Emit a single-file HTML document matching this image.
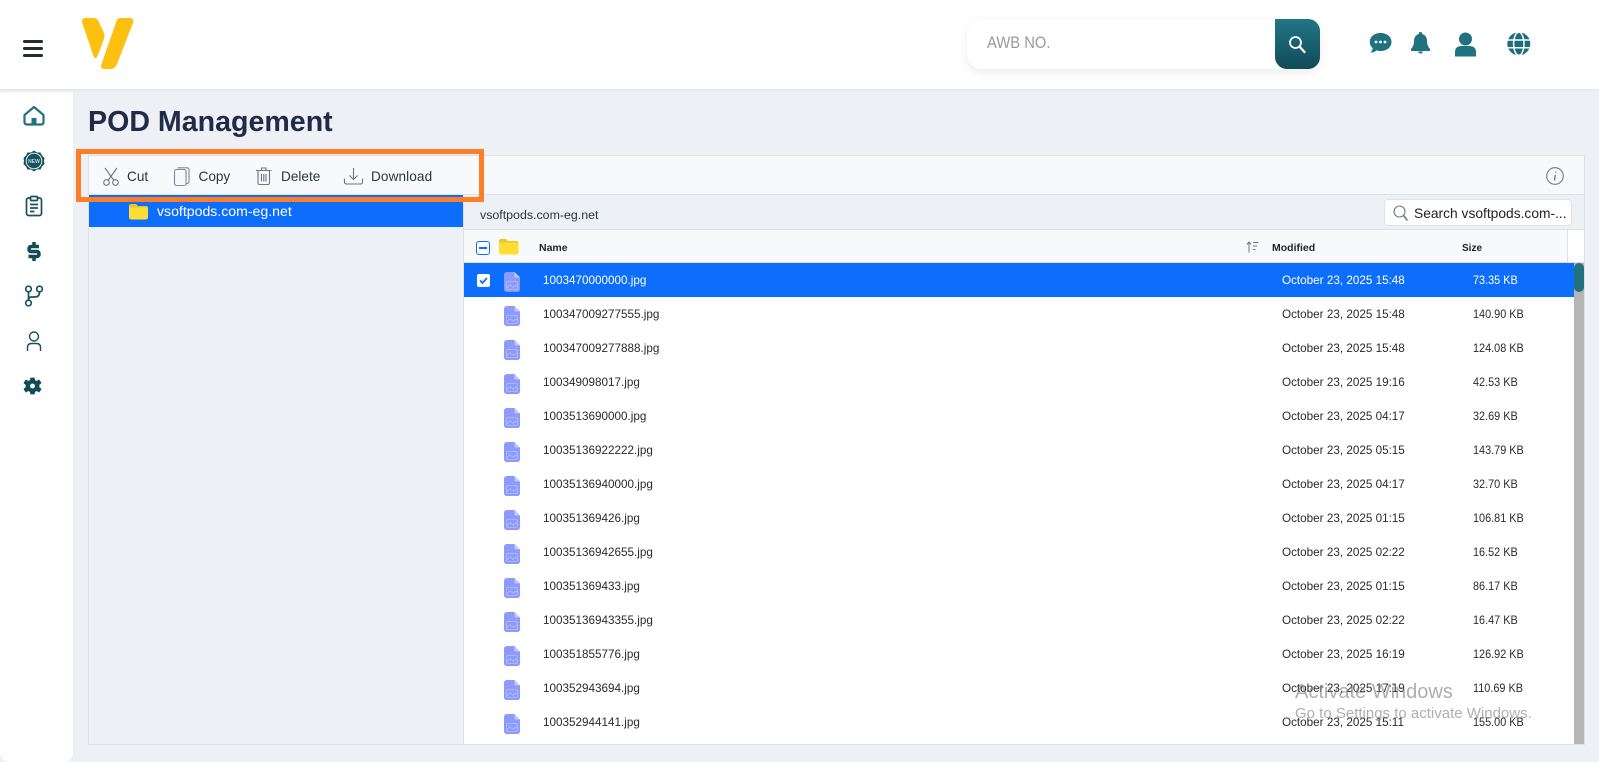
<!DOCTYPE html>
<html><head><meta charset="utf-8"><title>POD Management</title>
<style>
*{box-sizing:border-box}
html,body{margin:0;padding:0;width:1599px;height:762px;overflow:hidden;background:#edf0f5;font-family:"Liberation Sans",sans-serif;color:#222}
.a{position:absolute;white-space:nowrap}
svg{position:absolute;overflow:visible}
.row{position:absolute;left:464px;width:1110px;height:34px;font-size:11.700px;color:#2b2b2b;background:#fff}
.row span{position:absolute;top:10.500px;line-height:14px;white-space:nowrap}
.row .n{left:79px}.row .d{left:818px}.row .s{left:1009px;transform:scaleX(.93);transform-origin:left}
.row svg{left:40px;top:9px}
.row.sel{background:#0d6efd;color:#fff}
.tb{font-size:13.600px;color:#2c3440;top:169px;line-height:16px}
</style></head><body>
<svg width="0" height="0" style="position:absolute"><defs>
<symbol id="f" viewBox="0 0 16 20"><path d="M3 0H10.500L16 5.500V17Q16 20 13 20H3Q0 20 0 17V3Q0 0 3 0Z" fill="#8c9bfb"/><path d="M10.500 0L16 5.500H12Q10.500 5.500 10.500 4Z" fill="#c2cafd"/><rect x="2.500" y="9.500" width="11" height="8" rx="1.500" fill="none" stroke="#adb7fd" stroke-width="1"/><path d="M3 15.500L6 12.700L9 15L13 13" fill="none" stroke="#adb7fd" stroke-width="1"/></symbol>
</defs></svg>

<div class="a" style="left:0;top:0;width:1599px;height:89px;background:#fff;box-shadow:0 1px 3px rgba(0,0,0,.05)"></div>
<div class="a" style="left:0;top:92px;width:73px;height:670px;background:#fff;border-radius:0 0 10px 10px"></div>

<!-- hamburger -->
<div class="a" style="left:23px;top:40px;width:20px;height:3px;background:#262b33;border-radius:1.500px"></div>
<div class="a" style="left:23px;top:47px;width:20px;height:3px;background:#262b33;border-radius:1.500px"></div>
<div class="a" style="left:23px;top:54px;width:20px;height:3px;background:#262b33;border-radius:1.500px"></div>

<!-- logo -->
<svg style="left:0;top:0" width="140" height="75"><path d="M85 18H94Q97 18 98.500 21L104 33Q105 36 104 39L97.500 56Q95.500 60 93.500 56L82.300 23Q81 18 85 18Z" fill="#fdc010"/><path d="M120 18H130Q134.500 18 133 23L117 64Q115 69 110 69H104Q100 69 101.500 64L116.500 21Q117.500 18 120 18Z" fill="#fdc010"/></svg>

<!-- search -->
<div class="a" style="left:967px;top:19px;width:353px;height:50px;background:#fff;border-radius:14px;box-shadow:0 3px 10px rgba(0,0,0,.08)"></div>
<div class="a" style="left:987px;top:33px;font-size:17px;line-height:20px;color:#9a9a9a;transform:scaleX(.87);transform-origin:left">AWB NO.</div>
<div class="a" style="left:1275px;top:19px;width:45px;height:50px;background:linear-gradient(#227686,#124a57);border-radius:0 12px 12px 12px"></div>
<svg style="left:1288px;top:35px" width="18" height="18" fill="none" stroke="#fff"><circle cx="7.500" cy="7.500" r="5.500" stroke-width="1.800"/><path d="M11.500 11.500L16.500 17" stroke-width="2.200" stroke-linecap="round"/></svg>

<!-- top icons -->
<svg style="left:1369px;top:32px" width="24" height="24"><path d="M11.500 1C17.500 1 22.500 4.500 22.500 10S17.500 19 11.500 19Q9.500 19 7.700 18.400Q5 20.700 1.500 20.500Q3.500 18.500 3.700 16.200Q.8 13.500 .8 10C.8 4.500 5.500 1 11.500 1Z" fill="#20727f"/><circle cx="7" cy="10" r="1.400" fill="#fff"/><circle cx="11.500" cy="10" r="1.400" fill="#fff"/><circle cx="16" cy="10" r="1.400" fill="#fff"/></svg>
<svg style="left:1410px;top:32px" width="21" height="22"><path d="M10.500 0Q12.300 0 12.300 2Q17 3.500 17 9Q17 14 20 17V19H1V17Q4 14 4 9Q4 3.500 8.700 2Q8.700 0 10.500 0Z" fill="#20727f"/><path d="M8 19.500H13Q12.500 21.500 10.500 21.500Q8.500 21.500 8 19.500Z" fill="#20727f"/></svg>
<svg style="left:1454px;top:32px" width="24" height="25"><circle cx="11.500" cy="7" r="6.500" fill="#20727f"/><path d="M1 24.500V20Q1 14 8 14H15Q22 14 22 20V24.500Z" fill="#20727f"/></svg>
<svg style="left:1507px;top:32px" width="24" height="24"><circle cx="11.800" cy="11.800" r="11.500" fill="#1c6c79"/><g fill="none" stroke="#fff" stroke-width="1.500"><path d="M.5 8H23.500M.5 15.700H23.500"/><ellipse cx="11.800" cy="11.800" rx="5.200" ry="11.500"/></g></svg>

<!-- sidebar icons -->
<svg style="left:23px;top:105px" width="22" height="22" fill="none" stroke="#20727f" stroke-width="2.200"><path d="M1.500 10L11 2L20.500 10V17Q20.500 19.500 18 19.500H4Q1.500 19.500 1.500 17Z" stroke-linejoin="round"/><rect x="8.500" y="13" width="5" height="7" fill="#20727f" stroke="none"/></svg>
<svg style="left:23px;top:150px" width="22" height="22"><path d="M11 .5L14 2.500L17.500 2.500L19 5.500L21.500 8L21 11L21.500 14L19 16.500L17.500 19.500L14 19.500L11 21.500L8 19.500L4.500 19.500L3 16.500L.5 14L1 11L.5 8L3 5.500L4.500 2.500L8 2.500Z" fill="#17535f"/><circle cx="11" cy="11" r="7.800" fill="#17535f" stroke="#dfe9eb" stroke-width="1"/><text x="11" y="12.800" text-anchor="middle" font-family="Liberation Sans" font-size="5px" font-weight="bold" fill="#c9dadd">NEW</text></svg>
<svg style="left:25px;top:195px" width="18" height="22" fill="none" stroke="#17535f" stroke-width="1.700"><rect x="1.500" y="3" width="15" height="17.500" rx="2"/><rect x="5.500" y="1.500" width="7" height="4" fill="#fff" rx="1"/><path d="M5 9.500H13M5 13H13M5 16.500H9.500"/></svg>
<svg style="left:27px;top:241px" width="14" height="21" fill="none" stroke="#124a57" stroke-width="3.500"><path d="M12 5.500H4.500Q2 5.500 2 8Q2 10.500 4.500 10.500H9.500Q12 10.500 12 13Q12 15.500 9.500 15.500H1.500"/><path d="M7 1V5M7 16V20"/></svg>
<svg style="left:24px;top:284px" width="22" height="22" fill="none" stroke="#17535f" stroke-width="1.700"><circle cx="4.500" cy="5" r="2.800"/><circle cx="15.500" cy="5" r="2.800"/><circle cx="4.500" cy="19" r="2.800"/><path d="M4.500 8V16M15.500 8Q15.500 13 11 13H7Q5 13 4.500 16"/></svg>
<svg style="left:26px;top:331px" width="16" height="22" fill="none" stroke="#17535f" stroke-width="1.400"><circle cx="8" cy="5.500" r="4.500"/><path d="M1.500 20V16.500Q1.500 12.500 5.500 12.500H10.500Q14.500 12.500 14.500 16.500V20"/></svg>
<svg style="left:24px;top:377px" width="17" height="18"><path d="M6.800 0H10.200L10.700 2.500L12.800 3.400L15 2L17 4.900L15 6.600V9.400L17 11.100L15 14L12.800 12.600L10.700 13.500L10.200 16H6.800L6.300 13.500L4.200 12.600L2 14L0 11.100L2 9.400V6.600L0 4.900L2 2L4.200 3.400L6.300 2.500Z" transform="translate(0,1)" fill="#124a57" stroke="#124a57" stroke-width=".8" stroke-linejoin="round"/><circle cx="8.500" cy="9" r="2.400" fill="#fff"/></svg>

<!-- title -->
<div class="a" style="left:88px;top:104px;font-size:28.600px;line-height:36px;font-weight:bold;color:#232a49">POD Management</div>

<!-- file manager panel -->
<div class="a" style="left:88px;top:155px;width:1497px;height:590px;border:1px solid #dee2e6;background:#edf0f5"></div>
<div class="a" style="left:89px;top:156px;width:1495px;height:39px;background:#f8f9fa;border-bottom:1px solid #dee2e6"></div>

<!-- toolbar -->
<svg style="left:103px;top:167px" width="16" height="19" fill="none" stroke="#6f7680" stroke-width="1.100"><circle cx="3.500" cy="15.500" r="2.800"/><circle cx="12.500" cy="15.500" r="2.800"/><path d="M2 1L11 13.500M14 1L5 13.500"/></svg>
<div class="a tb" style="left:127px">Cut</div>
<svg style="left:174px;top:167px" width="16" height="19" fill="none" stroke="#7a8899" stroke-width="1.100"><rect x=".5" y="2.500" width="11.500" height="16" rx="2"/><path d="M3.500 .8H13Q15 .8 15 3V14Q15 16.500 12.500 16.500"/></svg>
<div class="a tb" style="left:198.500px">Copy</div>
<svg style="left:256px;top:167px" width="16" height="18" fill="none" stroke="#6f7680" stroke-width="1.100"><path d="M0 3.500H15.500M5.500 3V1H10V3M2 4V16Q2 17.500 3.500 17.500H12Q13.500 17.500 13.500 16V4M5.500 7V14.500M7.800 7V14.500M10 7V14.500"/></svg>
<div class="a tb" style="left:281px">Delete</div>
<svg style="left:344px;top:167px" width="19" height="18" fill="none" stroke="#6f7680" stroke-width="1.100"><path d="M9.500 1V12M5.500 8.500L9.500 12.500L13.500 8.500M.5 11.500V15Q.5 17 2.500 17H16.500Q18.500 17 18.500 15V11.500"/></svg>
<div class="a tb" style="left:371px;letter-spacing:.1px">Download</div>

<!-- orange callout -->
<div class="a" style="left:76px;top:148.500px;width:407.700px;height:53px;border:5px solid #fd7e26;z-index:5"></div>
<svg style="left:1546px;top:167px" width="18" height="18" fill="none" stroke="#6f7680" stroke-width="1.100"><circle cx="9" cy="9" r="8.300"/><path d="M9.800 4.500V5.500M9.300 7.800L8.500 13.500" stroke-width="1.300"/></svg>

<!-- tree -->
<div class="a" style="left:89px;top:195px;width:374px;height:32px;background:#0d6efd"></div>
<svg style="left:129px;top:204px" width="20" height="16"><path d="M2 0H7L9 2H17Q19 2 19 4V5H0V2Q0 0 2 0Z" fill="#f0c32c"/><path d="M0 3.500H19V13Q19 15.500 16.500 15.500H2.500Q0 15.500 0 13Z" fill="#ffdd33"/></svg>
<div class="a" style="left:157px;top:203px;font-size:14.100px;line-height:16px;color:#fff">vsoftpods.com-eg.net</div>
<div class="a" style="left:463px;top:195px;width:1px;height:549px;background:#dee2e6"></div>

<!-- breadcrumb -->
<div class="a" style="left:480px;top:208px;font-size:12.400px;line-height:14px;color:#2c3440">vsoftpods.com-eg.net</div>
<div class="a" style="left:1384px;top:199px;width:188px;height:27px;background:#fff;border:1px solid #dee2e6;border-radius:4px"></div>
<svg style="left:1393px;top:205px" width="16" height="17" fill="none" stroke="#6f7680" stroke-width="1.100"><circle cx="6.500" cy="6.500" r="5.500"/><path d="M10.500 10.500L14.500 15.500" stroke-width="1.500"/></svg>
<div class="a" style="left:1414px;top:206px;font-size:13.800px;line-height:16px;color:#222">Search vsoftpods.com-...</div>

<!-- table header -->
<div class="a" style="left:464px;top:229px;width:1120px;height:34px;background:#f8f9fa;border-top:1px solid #dee2e6;border-bottom:1px solid #dee2e6"></div>
<div class="a" style="left:1567px;top:230px;width:17px;height:32px;background:#fff;border-left:1px solid #dee2e6"></div>
<div class="a" style="left:476px;top:241px;width:14px;height:14px;border:1.300px solid #0d6efd;border-radius:3px;background:#fff"></div>
<div class="a" style="left:479px;top:247px;width:8px;height:1.500px;background:#0d6efd"></div>
<svg style="left:499px;top:239px" width="20" height="16"><path d="M2 0H7L9 2H17.500Q19.500 2 19.500 4V5H0V2Q0 0 2 0Z" fill="#f0c32c"/><path d="M0 3.500H19.500V13Q19.500 15.500 17 15.500H2.500Q0 15.500 0 13Z" fill="#ffdd33"/></svg>
<div class="a" style="left:539px;top:242px;font-size:10.500px;line-height:13px;font-weight:bold;color:#212529">Name</div>
<svg style="left:1246px;top:241px" width="13" height="12" fill="none" stroke="#6f7680" stroke-width="1"><path d="M3 11.500V1M.8 3.500L3 1L5.200 3.500M7 1.500H12.500M7 5H11M7 8.500H9.500"/></svg>
<div class="a" style="left:1272px;top:242px;font-size:10.500px;line-height:13px;font-weight:bold;color:#212529">Modified</div>
<div class="a" style="left:1462px;top:242px;font-size:10px;line-height:13px;font-weight:bold;color:#212529">Size</div>

<!-- rows -->
<div class="row sel" style="top:263px"><svg width="16" height="20"><use href="#f"/></svg><span class="n">1003470000000.jpg</span><span class="d">October 23, 2025 15:48</span><span class="s">73.35 KB</span></div>
<div class="row" style="top:297px"><svg width="16" height="20"><use href="#f"/></svg><span class="n">100347009277555.jpg</span><span class="d">October 23, 2025 15:48</span><span class="s">140.90 KB</span></div>
<div class="row" style="top:331px"><svg width="16" height="20"><use href="#f"/></svg><span class="n">100347009277888.jpg</span><span class="d">October 23, 2025 15:48</span><span class="s">124.08 KB</span></div>
<div class="row" style="top:365px"><svg width="16" height="20"><use href="#f"/></svg><span class="n">100349098017.jpg</span><span class="d">October 23, 2025 19:16</span><span class="s">42.53 KB</span></div>
<div class="row" style="top:399px"><svg width="16" height="20"><use href="#f"/></svg><span class="n">1003513690000.jpg</span><span class="d">October 23, 2025 04:17</span><span class="s">32.69 KB</span></div>
<div class="row" style="top:433px"><svg width="16" height="20"><use href="#f"/></svg><span class="n">10035136922222.jpg</span><span class="d">October 23, 2025 05:15</span><span class="s">143.79 KB</span></div>
<div class="row" style="top:467px"><svg width="16" height="20"><use href="#f"/></svg><span class="n">10035136940000.jpg</span><span class="d">October 23, 2025 04:17</span><span class="s">32.70 KB</span></div>
<div class="row" style="top:501px"><svg width="16" height="20"><use href="#f"/></svg><span class="n">100351369426.jpg</span><span class="d">October 23, 2025 01:15</span><span class="s">106.81 KB</span></div>
<div class="row" style="top:535px"><svg width="16" height="20"><use href="#f"/></svg><span class="n">10035136942655.jpg</span><span class="d">October 23, 2025 02:22</span><span class="s">16.52 KB</span></div>
<div class="row" style="top:569px"><svg width="16" height="20"><use href="#f"/></svg><span class="n">100351369433.jpg</span><span class="d">October 23, 2025 01:15</span><span class="s">86.17 KB</span></div>
<div class="row" style="top:603px"><svg width="16" height="20"><use href="#f"/></svg><span class="n">10035136943355.jpg</span><span class="d">October 23, 2025 02:22</span><span class="s">16.47 KB</span></div>
<div class="row" style="top:637px"><svg width="16" height="20"><use href="#f"/></svg><span class="n">100351855776.jpg</span><span class="d">October 23, 2025 16:19</span><span class="s">126.92 KB</span></div>
<div class="row" style="top:671px"><svg width="16" height="20"><use href="#f"/></svg><span class="n">100352943694.jpg</span><span class="d">October 23, 2025 17:19</span><span class="s">110.69 KB</span></div>
<div class="row" style="top:705px;height:39px"><svg width="16" height="20"><use href="#f"/></svg><span class="n">100352944141.jpg</span><span class="d">October 23, 2025 15:11</span><span class="s">155.00 KB</span></div>

<!-- selected checkbox -->
<div class="a" style="left:477px;top:274px;width:13px;height:13px;background:#fff;border-radius:2px"></div>
<svg style="left:477px;top:274px" width="13" height="13" fill="none" stroke="#0d6efd" stroke-width="1.800"><path d="M3 6.500L5.500 9L10 4"/></svg>

<!-- scrollbar -->
<div class="a" style="left:1574px;top:263px;width:10px;height:481px;background:#b5b5b5"></div>
<div class="a" style="left:1574px;top:263px;width:10px;height:29px;background:#20727f;border-radius:5px"></div>

<!-- watermark -->
<div class="a" style="left:1295px;top:679px;font-size:20px;line-height:26px;color:rgba(120,120,120,.6)">Activate Windows</div>
<div class="a" style="left:1295px;top:706px;font-size:15px;line-height:16px;color:rgba(120,120,120,.6)">Go to Settings to activate Windows.</div>
</body></html>
